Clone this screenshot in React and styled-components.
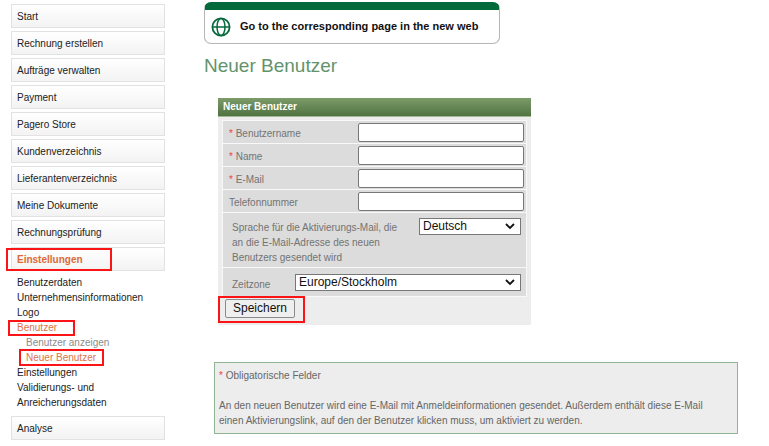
import React from "react";
import styled, { createGlobalStyle, css } from "styled-components";

const GlobalStyle = createGlobalStyle`
  *, *::before, *::after { box-sizing: border-box; }
  body {
    margin: 0;
    background: #fff;
    color: #222;
    font: 10px/15px "Liberation Sans", Arial, Helvetica, sans-serif;
  }
  input, select, button { font-family: inherit; }
`;

const Page = styled.div`
  display: grid;
  grid-template-columns: 154px minmax(0, 1fr);
  column-gap: 39px;
  padding: 4px 31px 6px 11px;
`;

const Nav = styled.nav`
  display: flex;
  flex-direction: column;
  gap: 3px;
`;

const marked = css`
  position: relative;
  &::after {
    content: "";
    position: absolute;
    inset: ${(p) => p.$mark};
    border: 2px solid #fb1416;
    pointer-events: none;
  }
`;

const MenuLink = styled.a`
  display: block;
  height: 24px;
  padding: 0 5px;
  border: 1px solid #e2e2e2;
  background: linear-gradient(#fff, #f3f3f3);
  color: ${(p) => (p.$active ? "#de6a35" : "#222")};
  font-weight: ${(p) => (p.$active ? "bold" : "normal")};
  line-height: 24px;
  text-decoration: none;
  ${(p) => p.$mark && marked}
`;

const SubMenu = styled.ul`
  margin: 1px 0 3px;
  padding: 0 20px 0 6px;
  list-style: none;
`;

const NestedMenu = styled.ul`
  margin: 0;
  padding: 0 0 0 9px;
  list-style: none;
`;

const tones = { normal: "#222", muted: "#8c8c8c", active: "#dc7448" };

const SubLink = styled.a`
  display: block;
  width: fit-content;
  color: ${(p) => tones[p.$tone || "normal"]};
  text-decoration: none;
  ${(p) => p.$mark && marked}
`;

const Main = styled.main`
  margin-top: -2px;
`;

const Banner = styled.a`
  display: flex;
  align-items: center;
  gap: 9px;
  width: 296px;
  max-width: 100%;
  height: 42px;
  padding: 0 6px;
  border: 1px solid #b5b5b5;
  border-top: 8px solid #046a3b;
  border-radius: 7px;
  color: #111;
  font-size: 11px;
  font-weight: bold;
  text-decoration: none;
`;

const Title = styled.h1`
  margin: 10px 0 20px;
  color: #63936b;
  font-size: 19px;
  font-weight: normal;
  line-height: 24px;
`;

const Panel = styled.form`
  width: 313px;
  max-width: 100%;
  margin-left: 14px;
  background: #ededed;
`;

const PanelTitle = styled.h2`
  height: 19px;
  margin: 0;
  padding: 0 5px;
  border-bottom: 1px solid #a3b896;
  background: linear-gradient(#7c9b69, #507342);
  color: #fff;
  font-size: 10px;
  line-height: 18px;
`;

const Fields = styled.div`
  margin: 3px 4px 0;
  border: 1px solid #f8f8f8;
  background: #dcdcdc;
  color: #737373;
`;

const FieldRow = styled.div`
  display: grid;
  grid-template-columns: 129px minmax(0, 1fr);
  align-items: center;
  height: 23px;
  padding: 0 2px 0 6px;
  border-bottom: 1px solid #f8f8f8;

  label {
    padding-top: 3px;
  }
`;

const LanguageRow = styled.div`
  display: flex;
  justify-content: space-between;
  align-items: flex-start;
  height: 55px;
  padding: 5px 5px 0 9px;
  border-bottom: 1px solid #f8f8f8;

  label {
    width: 176px;
    padding-top: 2px;
  }
`;

const ZoneRow = styled.div`
  display: flex;
  justify-content: space-between;
  align-items: center;
  height: 28px;
  padding: 0 5px 0 9px;

  label {
    padding-top: 5px;
  }
`;

const Required = styled.span`
  color: #f04242;
`;

const TextInput = styled.input`
  width: 100%;
  height: 19px;
  padding: 0 4px;
  border: 1px solid #777;
  border-radius: 2px;
  background: #fff;
  font-size: 12px;
`;

const SelectBox = styled.div`
  position: relative;
  width: ${(p) => p.$width};

  svg {
    position: absolute;
    top: 5px;
    right: 6px;
    pointer-events: none;
  }
`;

const Select = styled.select`
  display: block;
  width: 100%;
  height: 17px;
  padding: 0 4px 0 3px;
  border: 1px solid #777;
  border-radius: 0;
  background: #fff;
  color: #111;
  font-size: 12px;
  line-height: 15px;
  appearance: none;
`;

const Actions = styled.div`
  padding: 2px 7px 7px;
`;

const SaveButton = styled.button`
  display: block;
  width: 70px;
  height: 19px;
  padding: 0;
  border: 1px solid #8a8a8a;
  border-radius: 2px;
  background: #efefef;
  color: #111;
  font-size: 12px;
  line-height: 17px;
  ${marked}
`;

const Note = styled.section`
  margin: 37px 0 0 10px;
  padding: 5px 18px 5px 4px;
  border: 1px solid #8fb393;
  background: #ededed;
  color: #666;

  p {
    margin: 0;
  }
  p + p {
    margin-top: 15px;
  }
`;

const Globe = () => (
  <svg width="20" height="20" viewBox="0 0 20 20" fill="none" stroke="#046a3b" strokeWidth="1.8" aria-hidden="true">
    <circle cx="10" cy="10" r="8.6" />
    <ellipse cx="10" cy="10" rx="4" ry="8.6" strokeWidth="1.5" />
    <path d="M1.4 10h17.2" strokeWidth="1.5" />
  </svg>
);

const Chevron = () => (
  <svg width="10" height="7" viewBox="0 0 10 7" fill="none" stroke="#111" strokeWidth="1.8" aria-hidden="true">
    <path d="M1 1l4 4 4-4" />
  </svg>
);

const menu = [
  "Start",
  "Rechnung erstellen",
  "Aufträge verwalten",
  "Payment",
  "Pagero Store",
  "Kundenverzeichnis",
  "Lieferantenverzeichnis",
  "Meine Dokumente",
  "Rechnungsprüfung",
];

const fields = [
  { id: "username", label: "Benutzername", required: true },
  { id: "name", label: "Name", required: true },
  { id: "email", label: "E-Mail", required: true, type: "email" },
  { id: "phone", label: "Telefonnummer", type: "tel" },
];

export default function App() {
  return (
    <>
      <GlobalStyle />
      <Page>
        <Nav>
          {menu.map((item) => (
            <MenuLink key={item} href="#">{item}</MenuLink>
          ))}
          <MenuLink href="#" $active $mark="0 52px -1px -6px">Einstellungen</MenuLink>
          <SubMenu>
            <li><SubLink href="#">Benutzerdaten</SubLink></li>
            <li><SubLink href="#">Unternehmensinformationen</SubLink></li>
            <li><SubLink href="#">Logo</SubLink></li>
            <li>
              <SubLink href="#" $tone="active" $mark="0 -18px -1px -9px">Benutzer</SubLink>
              <NestedMenu>
                <li><SubLink href="#" $tone="muted">Benutzer anzeigen</SubLink></li>
                <li><SubLink href="#" $tone="active" $mark="-1px -8px -1px -7px">Neuer Benutzer</SubLink></li>
              </NestedMenu>
            </li>
            <li><SubLink href="#">Einstellungen</SubLink></li>
            <li><SubLink href="#">Validierungs- und Anreicherungsdaten</SubLink></li>
          </SubMenu>
          <MenuLink href="#">Analyse</MenuLink>
        </Nav>
        <Main>
          <Banner href="#">
            <Globe />
            Go to the corresponding page in the new web
          </Banner>
          <Title>Neuer Benutzer</Title>
          <Panel onSubmit={(e) => e.preventDefault()}>
            <PanelTitle>Neuer Benutzer</PanelTitle>
            <Fields>
              {fields.map(({ id, label, required, type }) => (
                <FieldRow key={id}>
                  <label htmlFor={id}>
                    {required && <Required>* </Required>}
                    {label}
                  </label>
                  <TextInput id={id} type={type || "text"} />
                </FieldRow>
              ))}
              <LanguageRow>
                <label htmlFor="language">
                  Sprache für die Aktivierungs-Mail, die an die E-Mail-Adresse des neuen Benutzers gesendet wird
                </label>
                <SelectBox $width="102px">
                  <Select id="language"><option>Deutsch</option></Select>
                  <Chevron />
                </SelectBox>
              </LanguageRow>
              <ZoneRow>
                <label htmlFor="zone">Zeitzone</label>
                <SelectBox $width="226px">
                  <Select id="zone"><option>Europe/Stockholm</option></Select>
                  <Chevron />
                </SelectBox>
              </ZoneRow>
            </Fields>
            <Actions>
              <SaveButton type="submit" $mark="-4px -11px -6px -8px">Speichern</SaveButton>
            </Actions>
          </Panel>
          <Note>
            <p><Required>*</Required> Obligatorische Felder</p>
            <p>
              An den neuen Benutzer wird eine E-Mail mit Anmeldeinformationen gesendet. Außerdem enthält diese E-Mail
              einen Aktivierungslink, auf den der Benutzer klicken muss, um aktiviert zu werden.
            </p>
          </Note>
        </Main>
      </Page>
    </>
  );
}
